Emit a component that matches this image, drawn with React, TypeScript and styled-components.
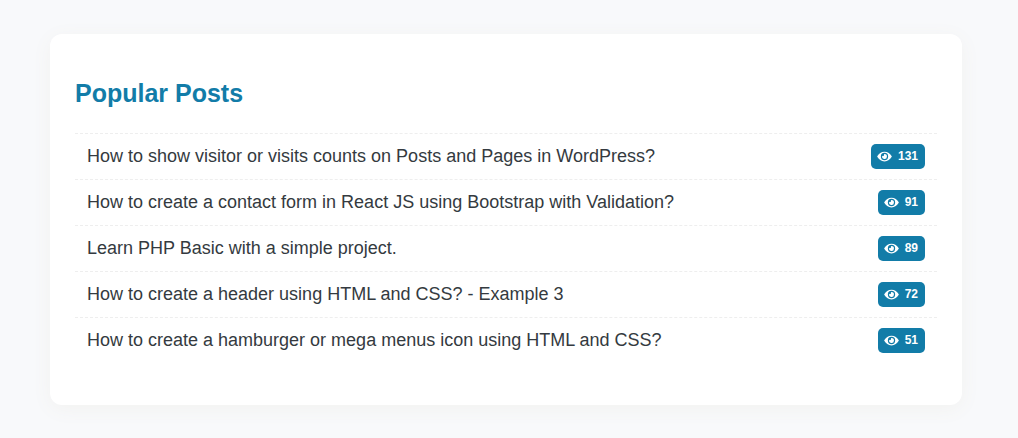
import React from "react";
import styled, { createGlobalStyle } from "styled-components";
import { FaEye } from "react-icons/fa";

const GlobalStyle = createGlobalStyle`
  *, *::before, *::after { box-sizing: border-box; }
  body {
    margin: 0;
    background: #f8f9fb;
    color: #343a40;
    font-family: "Liberation Sans", Arial, sans-serif;
  }
`;

const Page = styled.main`
  padding: 34px 56px 33px 50px;
`;

const Card = styled.section`
  padding: 42px 25px;
  background: #fff;
  border-radius: 12px;
  box-shadow: 0 4px 20px #f2f2f0;
`;

const Title = styled.h2`
  margin: 0 0 22px;
  color: #127ca8;
  font-size: 25px;
  font-weight: 700;
  line-height: 35px;
`;

const PostList = styled.ul`
  margin: 0;
  padding: 0;
  list-style: none;
`;

const PostRow = styled.li`
  display: flex;
  align-items: center;
  justify-content: space-between;
  gap: 12px;
  min-height: 46px;
  padding: 10px 12px;
  border-top: 1px dashed #eee;
`;

const PostLink = styled.a`
  color: inherit;
  font-size: 18px;
  line-height: 25px;
  text-decoration: none;
`;

const ViewBadge = styled.span`
  display: inline-flex;
  flex-shrink: 0;
  align-items: center;
  gap: 6px;
  height: 25px;
  padding: 0 7px 0 6px;
  border-radius: 5px;
  background: #127ca8;
  color: #fff;
  font-size: 12px;
  font-weight: 700;
  line-height: 25px;
`;

const EyeIcon = styled(FaEye)`
  width: 15px;
  height: 14px;
  padding-bottom: 1px;
`;

const posts = [
  { title: "How to show visitor or visits counts on Posts and Pages in WordPress?", views: 131 },
  { title: "How to create a contact form in React JS using Bootstrap with Validation?", views: 91 },
  { title: "Learn PHP Basic with a simple project.", views: 89 },
  { title: "How to create a header using HTML and CSS? - Example 3", views: 72 },
  { title: "How to create a hamburger or mega menus icon using HTML and CSS?", views: 51 },
];

export default function App() {
  return (
    <>
      <GlobalStyle />
      <Page>
        <Card>
          <Title>Popular Posts</Title>
          <PostList>
            {posts.map((post) => (
              <PostRow key={post.title}>
                <PostLink href="#">{post.title}</PostLink>
                <ViewBadge>
                  <EyeIcon aria-hidden="true" />
                  {post.views}
                </ViewBadge>
              </PostRow>
            ))}
          </PostList>
        </Card>
      </Page>
    </>
  );
}
